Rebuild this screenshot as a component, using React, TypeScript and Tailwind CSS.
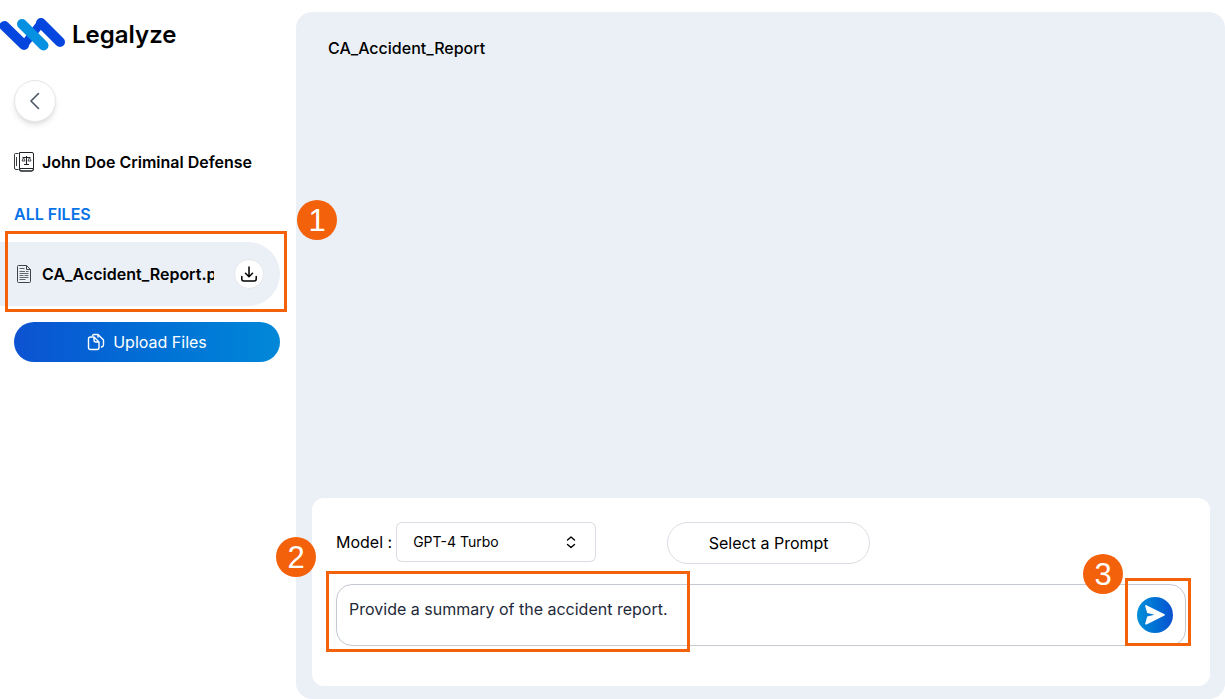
import React, { useState } from "react";

function Step({ n, className }: { n: number; className: string }) {
  return (
    <span
      className={`absolute z-20 flex size-10 items-center justify-center rounded-full bg-[#f4610b] font-['Liberation_Sans',sans-serif] text-[31px] leading-none text-white ${className}`}
    >
      {n}
    </span>
  );
}

function Outline({ className }: { className: string }) {
  return <span aria-hidden="true" className={`pointer-events-none absolute z-10 border-3 border-[#f4610b] ${className}`} />;
}

function Logo() {
  return (
    <svg width="66" height="36" viewBox="0 0 66 36" fill="none" strokeLinecap="round" strokeLinejoin="round" aria-hidden="true">
      <path d="M24 29 41 7" stroke="#0546de" strokeWidth="8" />
      <path d="M4.500 10 24 29M41 7 60 26" stroke="#0546de" strokeWidth="10" />
      <path d="M22 8 43.500 29.500" stroke="#0690e2" strokeWidth="10" />
    </svg>
  );
}

function CaseIcon() {
  return (
    <svg className="shrink-0" width="20" height="20" viewBox="0 0 20 20" fill="none" stroke="#1f2328" aria-hidden="true">
      <path d="M5.500.500H18A1.500 1.500 0 0 1 19.500 2V16.500H5.500Z" />
      <path d="M5.500 16.500q0 2.500 2 2.500H17.500q2 0 2-2.500" strokeWidth="1.300" />
      <path d="M4.500 1.500H1.500Q.500 1.500.500 2.500V16Q.500 17.500 2 17.500H4.500M2.500 5v9" strokeWidth=".9" />
      <path d="M12.500 4v8M10 12.500h5M8.500 5.500h8" strokeWidth="1.100" />
      <path d="M9.500 5.500 8 9h3ZM15.500 5.500 14 9h3Z" strokeWidth=".8" />
    </svg>
  );
}

function FileIcon() {
  return (
    <svg className="shrink-0" width="16" height="18" viewBox="0 0 16 18" fill="none" stroke="#3f444a" aria-hidden="true">
      <path d="M1.500 1.500q0-1 1-1H10.500L14.500 4.500V16.500q0 1-1 1h-11q-1 0-1-1ZM10.500.500V4.500h4" />
      <path d="M3.500 3.500H8.500M3.500 6.500H9M10 6.500h2.500M3.500 8.500h9M3.500 10.500h4M8.500 10.500h4M3.500 12.500h9M3.500 14.500h6" strokeWidth=".8" />
    </svg>
  );
}

function Sidebar() {
  return (
    <aside className="w-74 shrink-0 pt-4">
      <div className="flex h-9 items-center gap-1.5">
        <Logo />
        <span className="pt-0.5 text-2xl font-semibold">Legalyze</span>
      </div>
      <div className="pr-4 pl-3.5">
        <button
          type="button"
          aria-label="Back"
          className="mt-7 flex size-[42px] items-center justify-center rounded-full border border-gray-200 bg-white shadow-md"
        >
          <svg width="24" height="24" viewBox="0 0 24 24" fill="none" stroke="#4b5563" strokeWidth="1.600" strokeLinecap="round" strokeLinejoin="round" aria-hidden="true">
            <path d="M15.500 4.500 8 12l7.500 7.500" />
          </svg>
        </button>
        <div className="mt-7 flex h-6 items-center gap-2">
          <CaseIcon />
          <h1 className="text-base font-semibold whitespace-nowrap">John Doe Criminal Defense</h1>
        </div>
        <h2 className="mt-7 text-base leading-6 font-semibold text-[#0672e8]">ALL FILES</h2>
      </div>
      <div className="relative mt-4 mr-4">
        <div className="flex h-16 items-center rounded-r-full bg-[#ebf0f7] pr-4 pl-4">
          <FileIcon />
          <a href="#file" className="ml-2.5 w-43 shrink-0 overflow-hidden text-base font-semibold whitespace-nowrap">
            CA_Accident_Report.pdf
          </a>
          <button
            type="button"
            aria-label="Download"
            className="ml-auto flex size-[30px] shrink-0 items-center justify-center rounded-full border border-gray-200 bg-white"
          >
            <svg width="16" height="16" viewBox="0 0 16 16" fill="none" stroke="#000" strokeWidth="1.500" strokeLinecap="round" strokeLinejoin="round" aria-hidden="true">
              <path d="M8 1v9.500M4.500 7.300 8 10.700l3.500-3.400M.800 10.500v2.500q0 2 2 2h10.400q2 0 2-2v-2.500" />
            </svg>
          </button>
        </div>
        <Outline className="-top-[11px] -right-[7px] -bottom-1.5 left-[5px]" />
        <Step n={1} className="-top-[42px] -right-[57px]" />
      </div>
      <div className="mt-4 pr-4 pl-3.5">
        <button
          type="button"
          className="flex h-10 w-full items-center justify-center gap-2 rounded-full bg-linear-to-r from-[#0d52d1] to-[#0288d8] text-base text-white"
        >
          <svg width="18" height="18" viewBox="0 0 18 18" fill="none" stroke="#fff" strokeWidth="1.400" strokeLinecap="round" strokeLinejoin="round" aria-hidden="true">
            <path d="M1.500 6q0-2 2-2H7L12 9v5.500q0 2-2 2H3.500q-2 0-2-2ZM7 4v3q0 2 2 2h3" />
            <path d="M5.500 2.500q.500-1 2-1H11L16.500 7v4.500q0 2-2 2.500M11 1.500V4" />
          </svg>
          Upload Files
        </button>
      </div>
    </aside>
  );
}

function Composer() {
  const [prompt, setPrompt] = useState("Provide a summary of the accident report.");
  return (
    <form className="relative rounded-xl bg-white px-6 pt-6 pb-10" onSubmit={(e) => e.preventDefault()}>
      <div className="flex items-start">
        <div className="flex h-10 items-center gap-1">
          <label htmlFor="model" className="text-base">Model :</label>
          <div className="relative">
            <select id="model" className="h-10 w-50 appearance-none rounded-md border border-gray-300/80 bg-white px-4 text-sm text-black">
              <option>GPT-4 Turbo</option>
            </select>
            <svg className="pointer-events-none absolute top-3 right-4" width="16" height="16" viewBox="0 0 16 16" fill="none" stroke="#000" strokeWidth="1.400" strokeLinecap="round" strokeLinejoin="round" aria-hidden="true">
              <path d="M3.500 6 7 3l3.500 3M3.500 10.500 7 13.500l3.500-3" />
            </svg>
          </div>
        </div>
        <button type="button" className="ml-[71px] h-[42px] w-[203px] rounded-full border border-gray-300/80 text-base">
          Select a Prompt
        </button>
      </div>
      <div className="relative mt-5 flex h-[62px] items-center rounded-2xl border border-[#c5c9d2] pr-3">
        <textarea
          aria-label="Prompt"
          value={prompt}
          onChange={(e) => setPrompt(e.target.value)}
          className="h-full flex-1 resize-none px-3 pt-3 text-base text-gray-800 outline-none"
        />
        <div className="relative">
          <button
            type="submit"
            aria-label="Send"
            className="flex size-9 items-center justify-center rounded-full bg-linear-to-r from-[#058fd8] to-[#0d50d0]"
          >
            <svg width="22" height="22" viewBox="0 0 22 22" fill="#fff" aria-hidden="true">
              <path d="M1.200 2.200Q1 .600 2.500 1.200L20.500 10.200Q21.600 10.800 20.500 11.400L2.500 20.400Q1 21 1.200 19.400L3.200 12.600 10.500 10.800 3.200 9Z" />
            </svg>
          </button>
          <Outline className="-top-[19px] -right-[18px] -bottom-[13px] -left-3" />
          <Step n={3} className="-top-[43px] -left-[54px]" />
        </div>
        <Outline className="-top-[14px] -bottom-[7px] -left-[11px] w-[364px]" />
        <Step n={2} className="-top-12 -left-[61px]" />
      </div>
    </form>
  );
}

export default function App() {
  return (
    <div className="flex min-h-screen bg-white font-['Inter',sans-serif] text-black">
      <Sidebar />
      <main className="mt-3 flex min-w-0 flex-1 flex-col rounded-2xl bg-[#ebf0f7] pr-[15px] pb-[13px] pl-4">
        <h2 className="px-4 pt-6 text-base leading-6 font-medium">CA_Accident_Report</h2>
        <div className="flex-1" />
        <Composer />
      </main>
    </div>
  );
}
